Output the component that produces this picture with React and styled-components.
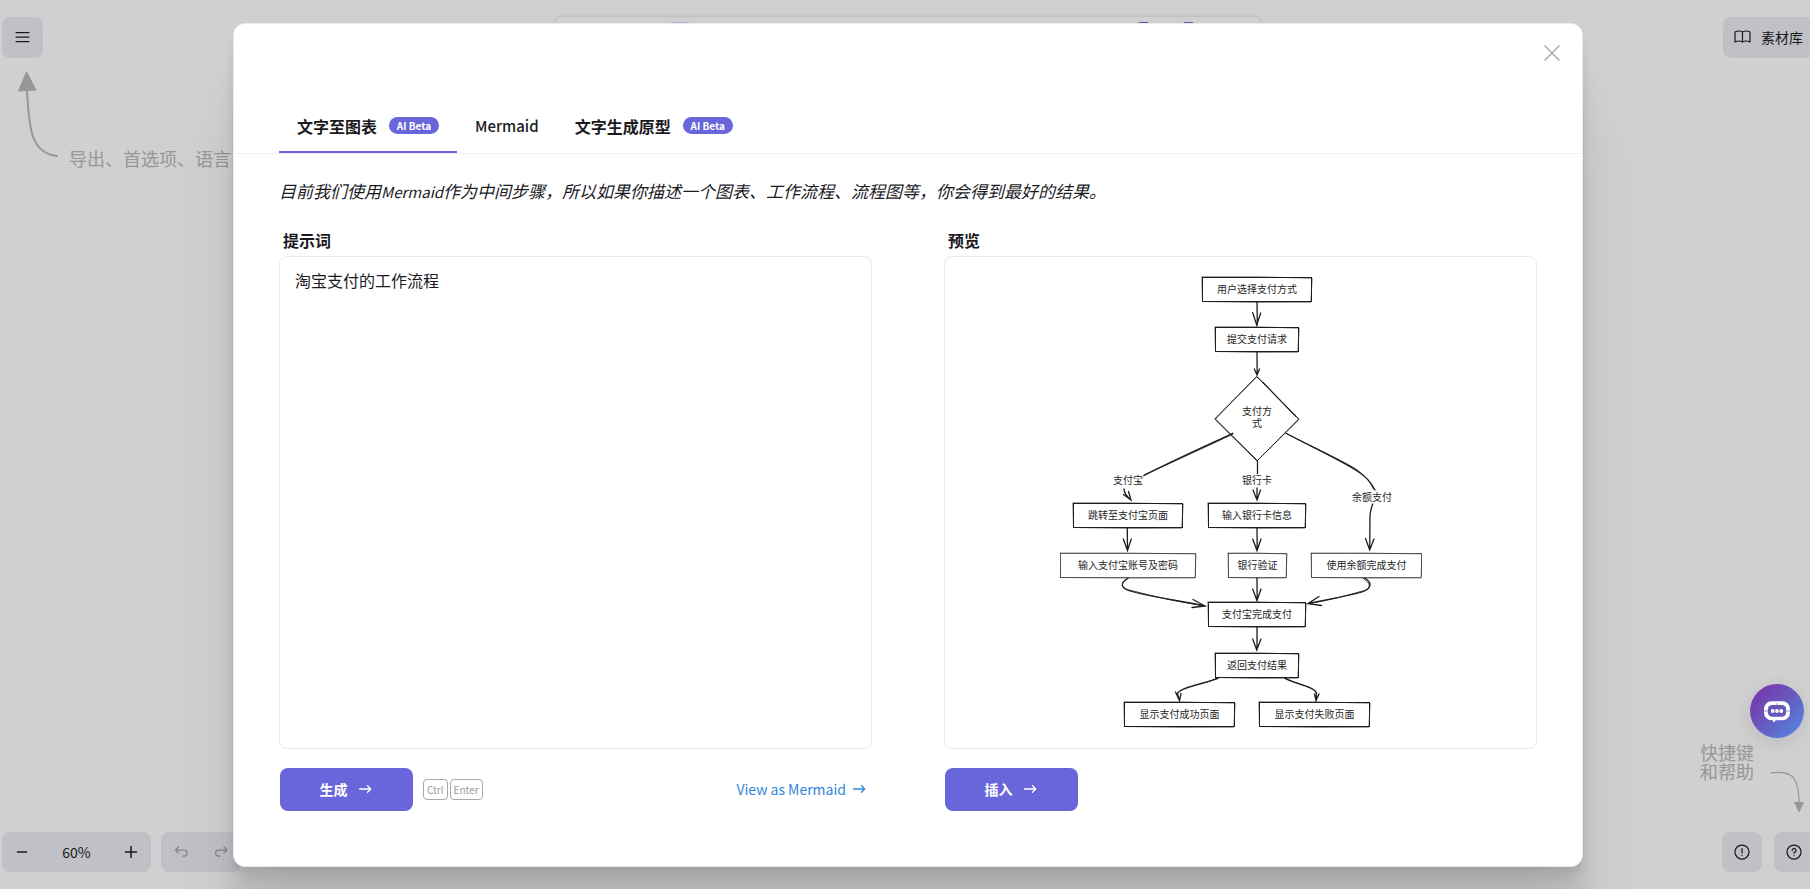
import React from "react";
import styled, { createGlobalStyle } from "styled-components";

const GlobalStyle = createGlobalStyle`
  *, *::before, *::after { box-sizing: border-box; }
  html, body { margin: 0; background: #fff; }
  body { overflow: hidden; }
  body, button, textarea, kbd {
    font-family: "Noto Sans CJK SC", "Noto Sans", sans-serif;
  }
  button { border: 0; padding: 0; cursor: pointer; color: inherit; }
`;

const ACCENT = "#6965db";
const INK = "#1b1b1f";

const Page = styled.div`
  height: 100vh;
  overflow: hidden;
  color: ${INK};
`;

/* The editor is slightly wider than the window, so its right edge is cut. */
const Editor = styled.div`
  position: relative;
  width: calc(100% + 6px);
  height: 100%;
  padding: 17px 2px;
  display: flex;
  flex-direction: column;
  justify-content: space-between;
`;

const TopBar = styled.header`
  display: flex;
  justify-content: space-between;
  align-items: flex-start;
`;

const BottomBar = styled.footer`
  display: flex;
  justify-content: space-between;
  align-items: flex-end;
`;

const Column = styled.div`
  display: flex;
  flex-direction: column;
  align-items: ${(p) => p.$align || "flex-start"};
`;

const Row = styled.div`
  display: flex;
  align-items: ${(p) => p.$align || "center"};
  gap: ${(p) => p.$gap || 0}px;
`;

const ToolButton = styled.button`
  display: flex;
  align-items: center;
  justify-content: center;
  gap: 10px;
  width: 40px;
  height: 40px;
  border-radius: 8px;
  background: #ececf4;
`;

const MenuButton = styled(ToolButton)`
  width: 41px;
  height: 41px;
`;

const LibraryButton = styled(ToolButton)`
  width: 91px;
  height: 41px;
  padding-bottom: 2px;
  font-size: 14px;
`;

const ButtonGroup = styled.div`
  display: flex;
  align-items: center;
  height: 40px;
  border-radius: 8px;
  background: #ececf4;
`;

const GroupButton = styled.button`
  display: flex;
  align-items: center;
  justify-content: center;
  width: ${(p) => p.$width || 40}px;
  height: 40px;
  background: transparent;
  font-size: 14px;
  opacity: ${(p) => (p.disabled ? 0.35 : 1)};
`;

const ShapeBar = styled.div`
  position: absolute;
  left: 50%;
  top: 16px;
  width: 708px;
  height: 46px;
  margin-left: -354px;
  border: 1px solid #ededed;
  border-radius: 8px;
  box-shadow: 0 0 3px rgba(0, 0, 0, 0.1);
  display: flex;
  justify-content: space-between;
  padding: 5px 66px 5px 110px;
`;

const ActiveTool = styled.span`
  width: 30px;
  height: 34px;
  border-radius: 8px;
  background: #e0dfff;
`;

const ToolMark = styled.span`
  width: 13px;
  height: 13px;
  border: 2px solid ${ACCENT};
  border-radius: 4px;
`;

const Hint = styled.p`
  margin: 0;
  color: #b8b8b8;
  font-size: 18px;
  line-height: 19px;
  white-space: nowrap;
`;

const MenuHint = styled.div`
  display: flex;
  align-items: flex-end;
  gap: 10px;
  padding: 13px 0 0 15px;
`;

const HelpHint = styled.div`
  display: flex;
  align-items: flex-start;
  gap: 14px;
  padding: 0 8px 18px 0;
`;

const ChatButton = styled.button`
  display: flex;
  align-items: center;
  justify-content: center;
  width: 54px;
  height: 54px;
  margin: 0 10px 5px 0;
  position: relative;
  z-index: 2;
  border-radius: 50%;
  background: linear-gradient(135deg, #7b2fa8 0%, #6a55bb 45%, #4f8de6 100%);
  box-shadow: 0 4px 16px rgba(80, 80, 140, 0.16);
`;

const Overlay = styled.div`
  position: absolute;
  inset: 0;
  z-index: 1;
  display: flex;
  align-items: center;
  justify-content: center;
  background: rgba(18, 18, 18, 0.2);
`;

const Modal = styled.section`
  position: relative;
  width: calc(100% - 466px);
  min-width: 900px;
  height: calc(100% - 45px);
  display: flex;
  flex-direction: column;
  padding: 77px 0 55px;
  border: 1px solid #ebebeb;
  border-radius: 12px;
  background: #fff;
  box-shadow:
    0 100px 80px rgba(0, 0, 0, 0.07),
    0 41px 33px rgba(0, 0, 0, 0.05),
    0 22px 18px rgba(0, 0, 0, 0.04),
    0 12px 10px rgba(0, 0, 0, 0.04),
    0 6px 5px rgba(0, 0, 0, 0.03),
    0 2px 2px rgba(0, 0, 0, 0.02);
`;

const CloseButton = styled.button`
  position: absolute;
  top: 17px;
  right: 18px;
  width: 24px;
  height: 24px;
  display: flex;
  align-items: center;
  justify-content: center;
  background: transparent;
  color: #adadad;
`;

const Tabs = styled.div`
  display: flex;
  padding: 0 45px;
  border-bottom: 1px solid #f0eff9;
`;

const Tab = styled.button`
  display: flex;
  align-items: center;
  gap: 12px;
  height: 52px;
  padding: 0 18px;
  background: transparent;
  border-bottom: 2px solid ${(p) => (p.$active ? ACCENT : "transparent")};
  font-size: ${(p) => (p.$latin ? 15 : 16)}px;
  font-weight: ${(p) => (p.$latin ? 500 : 700)};
`;

const Badge = styled.span`
  display: flex;
  align-items: center;
  justify-content: center;
  width: 50px;
  height: 17px;
  border-radius: 9px;
  background: ${ACCENT};
  color: #fff;
  font-size: 10px;
  font-weight: 700;
`;

const Description = styled.p`
  margin: 24px 45px 0;
  font-size: 17px;
  line-height: 26px;
  font-style: italic;
`;

const Latin = styled.span`
  font-size: 15px;
`;

const Panels = styled.div`
  flex: 1;
  min-height: 0;
  display: grid;
  grid-template-columns: 1fr 1fr;
  gap: 72px;
  padding: 23px 45px 0;
`;

const Panel = styled.div`
  display: flex;
  flex-direction: column;
  min-width: 0;
  min-height: 0;
`;

const PanelTitle = styled.label`
  padding-left: 4px;
  margin-bottom: 4px;
  font-size: 16px;
  line-height: 24px;
  font-weight: 700;
`;

const PromptBox = styled.textarea`
  flex: 1;
  width: 100%;
  min-height: 0;
  padding: 11px 15px;
  border: 1px solid #e9e9e9;
  border-radius: 8px;
  outline: 0;
  resize: none;
  background: #fff;
  color: ${INK};
  font-size: 16px;
  line-height: 24px;
`;

const PreviewBox = styled.div`
  flex: 1;
  min-height: 0;
  display: flex;
  align-items: center;
  justify-content: center;
  border: 1px solid #e9e9e9;
  border-radius: 8px;
`;

const Actions = styled.div`
  display: flex;
  align-items: center;
  height: 43px;
  margin-top: 19px;
  padding: 0 6px 0 1px;
`;

const PrimaryButton = styled.button`
  display: flex;
  align-items: center;
  justify-content: center;
  gap: 10px;
  width: 133px;
  height: 43px;
  padding-right: 2px;
  border-radius: 8px;
  background: ${ACCENT};
  color: #fff;
  font-size: 14px;
  font-weight: 700;
`;

const Keys = styled.div`
  display: flex;
  gap: 2px;
  margin-left: 10px;
`;

const Key = styled.kbd`
  height: 21px;
  padding: 0 3px;
  border: 1px solid #a9a9a9;
  border-radius: 4px;
  color: #999;
  font-size: 10px;
  line-height: 19px;
`;

const TextLink = styled.a`
  display: flex;
  align-items: center;
  gap: 6px;
  margin-left: auto;
  color: #2f86d9;
  font-size: 14px;
  text-decoration: none;
`;

const Icon = ({ size = 16, width = 1.25, children }) => (
  <svg
    width={size}
    height={size}
    viewBox={`0 0 ${size} ${size}`}
    fill="none"
    stroke="currentColor"
    strokeWidth={width}
    strokeLinecap="round"
    strokeLinejoin="round"
    aria-hidden="true"
  >
    {children}
  </svg>
);

const ArrowIcon = () => (
  <Icon size={14} width={1.3}>
    <path d="M1.500 7h11M9.500 3.800 12.700 7 9.500 10.200" />
  </Icon>
);

/* x, top, width, label, and whether the outline is drawn lightly */
const NODES = [
  [142, 2, 110, "用户选择支付方式"],
  [155, 52, 84, "提交支付请求"],
  [13, 228, 110, "跳转至支付宝页面"],
  [148, 228, 98, "输入银行卡信息"],
  [0, 278, 136, "输入支付宝账号及密码", true],
  [168, 278, 59, "银行验证", true],
  [251, 278, 111, "使用余额完成支付", true],
  [148, 327, 98, "支付宝完成支付"],
  [155, 378, 84, "返回支付结果"],
  [64, 427, 111, "显示支付成功页面"],
  [199, 427, 111, "显示支付失败页面"],
];

const EDGES = [
  "M197 27 197.3 50M192.7 37.7 196.7 50 200.7 38",
  "M197 77 197.2 100M194.3 94 197 100 199.6 94",
  "M172.7 158.3C150 169 112 186 83 201",
  "M64 214Q64 219 71 225M63.5 219.5 71 225 68.5 216.5",
  "M197.5 186V199M197 213V225M193 215 197 225 200.5 215",
  "M226 158.3C250 171 284 187 297 196Q309 203 315 215",
  "M312.7 229Q310 236 310 242L309.7 275M305.5 263.5 309.7 275 314 264",
  "M67.3 253 67.5 275.5M63.3 264 67.5 275.5 71.3 264",
  "M197 253 197.2 275.5M192.7 264 197 275.5 201 264",
  "M68 303.3C60 308 60 313 70 316 94 323 118 325 145 331M133 324.5 145 331 132 332.5",
  "M197 303 197.2 325.5M192.7 314 197 325.5 201 314",
  "M305 303.3C313 308 311 314 302 317 286 322 267 324 248 328.7M259 321.5 248 328.7 261.5 330.5",
  "M197 352.5 197 375M192.7 364 196.7 375 201 364",
  "M158 403.3C144 409 119 412 117.5 419L119.5 425.7M115.5 417 119.5 425.7 121 418.5",
  "M225 403.3C236 409 256 412 256.5 419L256 425.7M254.5 419 256 425.7 259 419",
];

/* Second passes of the pen over the long curves. */
const RETRACES = [
  "M173 159C148 171 108 189 84 200",
  "M226 158.3C254 173 284 186 298 195.500Q310 205 313.500 214",
  "M68 303.300C58 309 63 314 71 315.500 96 322 120 327 145 331",
  "M303 303.300C314 310 309 315 301 316.500 284 321 267 326 248 328.700",
  "M157 403.300C142 410 122 412 116.500 419",
  "M226 404C238 410 254 411 257 418",
];

const CAPTIONS = [
  [197, 140, "支付方"],
  [197, 152, "式"],
  [68, 209, "支付宝"],
  [197, 209, "银行卡"],
  [312, 226, "余额支付"],
];

const FlowSvg = styled.svg`
  display: block;
  max-width: 100%;
  max-height: 100%;
  font-family: "Noto Sans CJK SC", sans-serif;
  font-size: 10px;
`;

function FlowChart() {
  return (
    <FlowSvg width="362" height="455" viewBox="0 0 362 455" role="img" aria-label="淘宝支付的工作流程">
      <g fill="none" stroke="#1e1e1e" strokeLinecap="round">
        {NODES.map(([x, y, w, label, faint]) => (
          <g key={label}>
            <rect x={x + 0.5} y={y + 0.5} width={w - 1} height={24} strokeWidth={faint ? 0.6 : 1} />
            <path
              strokeWidth={faint ? 0.5 : 0.8}
              d={`M${x + 0.5} ${y}Q${x + w / 2} ${y - 0.5} ${x + w} ${y + 1}L${x + w - 1} ${y + 25}Q${x + w / 2} ${y + 25.5} ${x + 0.5} ${y + 24.5}L${x} ${y}`}
            />
          </g>
        ))}
        <path strokeWidth="1" d="M197 102 238.7 144 197 186 155 144.3Z" />
        <path strokeWidth="0.8" strokeDasharray="2 1" d="M197.7 102 239 144.5 197.5 185.5 155.5 144 196.6 101.5" />
        <path strokeWidth="1.1" d="M203 107.5 236 141.5" />
        {EDGES.map((d) => (
          <path key={d} d={d} strokeWidth="1.3" />
        ))}
        {RETRACES.map((d) => (
          <path key={d} d={d} strokeWidth="0.9" />
        ))}
      </g>
      <g fill="#1e1e1e" textAnchor="middle">
        {NODES.map(([x, y, w, label]) => (
          <text key={label} x={x + w / 2} y={y + 16}>{label}</text>
        ))}
        {CAPTIONS.map(([x, y, label]) => (
          <text key={label} x={x} y={y} stroke="#fff" strokeWidth="2" paintOrder="stroke">{label}</text>
        ))}
      </g>
    </FlowSvg>
  );
}

function EditorHeader() {
  return (
    <TopBar>
      <Column>
        <MenuButton aria-label="菜单">
          <Icon size={15}><path d="M1 2.500h13M1 7h13M1 11.500h13" /></Icon>
        </MenuButton>
        <MenuHint>
          <svg width="42" height="97" viewBox="0 0 42 97" aria-hidden="true">
            <path d="M9.500 1 19 19 1.500 20Z" fill="#b8b8b8" stroke="#b8b8b8" strokeLinejoin="round" />
            <path d="M10 19C12 58 14 82 40 85" fill="none" stroke="#b8b8b8" strokeWidth="2" strokeLinecap="round" />
          </svg>
          <Hint>导出、首选项、语言……</Hint>
        </MenuHint>
      </Column>
      <LibraryButton>
        <Icon size={17} width={1.2}>
          <path d="M8.500 4C6.500 2.800 3.500 2.800 1 4v10c2.500-1.200 5.500-1.200 7.500 0 2-1.200 5-1.200 7.500 0V4c-2.500-1.200-5.500-1.200-7.500 0v10" />
        </Icon>
        素材库
      </LibraryButton>
    </TopBar>
  );
}

function EditorFooter() {
  return (
    <BottomBar>
      <Row $gap={10}>
        <ButtonGroup>
          <GroupButton aria-label="缩小"><Icon width={1.5}><path d="M3.500 8h9" /></Icon></GroupButton>
          <GroupButton $width={69}>60%</GroupButton>
          <GroupButton aria-label="放大"><Icon width={1.5}><path d="M2.500 8h11M8 2.500v11" /></Icon></GroupButton>
        </ButtonGroup>
        <ButtonGroup>
          <GroupButton disabled aria-label="撤销">
            <Icon><path d="M5.500 9 2.500 6l3-3M2.500 6H11a3 3 0 0 1 0 6H9.500" /></Icon>
          </GroupButton>
          <GroupButton disabled aria-label="重做">
            <Icon><path d="m11 9 3-3-3-3M14 6H5.500a3 3 0 0 0 0 6H7" /></Icon>
          </GroupButton>
        </ButtonGroup>
      </Row>
      <Column $align="flex-end">
        <ChatButton aria-label="聊天">
          <svg width="28" height="24" viewBox="0 0 28 24" aria-hidden="true">
            <path d="M10 21.300H8.500a7.500 7.500 0 0 1-7.500-7.500V9.700a7.500 7.500 0 0 1 7.500-7.500h11a7.500 7.500 0 0 1 7.500 7.500v4.100a7.500 7.500 0 0 1-7.500 7.500h-6.500l-3 2.500Z" fill="#fff" />
            <rect x="4.800" y="6" width="18.400" height="11.800" rx="4.500" fill="#6759bc" />
            <path d="M14 4v3M1 12h3.500M23.500 12H27" stroke="#6759bc" strokeWidth="0.700" />
            <circle cx="9.700" cy="12" r="1.900" fill="#fff" />
            <circle cx="14" cy="12" r="1.900" fill="#fff" />
            <circle cx="18.300" cy="12" r="1.900" fill="#fff" />
          </svg>
        </ChatButton>
        <HelpHint>
          <Hint>快捷键<br />和帮助</Hint>
          <svg width="38" height="71" viewBox="0 -27 38 71" aria-hidden="true">
            <path d="M2 3C22 0 31 5 31 33" fill="none" stroke="#b8b8b8" strokeWidth="1.200" />
            <path d="M26 32h10l-5 11Z" fill="#b8b8b8" />
          </svg>
        </HelpHint>
        <Row $gap={12}>
          <ToolButton aria-label="状态">
            <Icon><circle cx="8" cy="8" r="7" /><path d="M8 4.500v4.500M8 11.300v.1" /></Icon>
          </ToolButton>
          <ToolButton aria-label="帮助">
            <Icon><circle cx="8" cy="8" r="7" /><path d="M6.200 6.400a1.900 1.900 0 1 1 2.700 1.700c-.6.300-.9.600-.9 1.200M8 11.500v.1" /></Icon>
          </ToolButton>
        </Row>
      </Column>
    </BottomBar>
  );
}

export default function App() {
  return (
    <Page>
      <GlobalStyle />
      <Editor>
        <ShapeBar>
          <ActiveTool />
          <Row $gap={32} $align="flex-start">
            <ToolMark />
            <ToolMark />
          </Row>
        </ShapeBar>
        <EditorHeader />
        <EditorFooter />
        <Overlay>
          <Modal role="dialog" aria-modal="true">
            <CloseButton aria-label="关闭">
              <Icon size={18} width={1.5}><path d="M2 2l14 14M16 2 2 16" /></Icon>
            </CloseButton>

            <Tabs role="tablist">
              <Tab role="tab" aria-selected="true" $active>
                文字至图表<Badge>AI Beta</Badge>
              </Tab>
              <Tab role="tab" aria-selected="false" $latin>Mermaid</Tab>
              <Tab role="tab" aria-selected="false">
                文字生成原型<Badge>AI Beta</Badge>
              </Tab>
            </Tabs>

            <Description>
              目前我们使用<Latin>Mermaid</Latin>作为中间步骤，所以如果你描述一个图表、工作流程、流程图等，你会得到最好的结果。
            </Description>

            <Panels>
              <Panel>
                <PanelTitle htmlFor="prompt">提示词</PanelTitle>
                <PromptBox id="prompt" defaultValue="淘宝支付的工作流程" />
                <Actions>
                  <PrimaryButton>生成<ArrowIcon /></PrimaryButton>
                  <Keys><Key>Ctrl</Key><Key>Enter</Key></Keys>
                  <TextLink href="#mermaid">View as Mermaid<ArrowIcon /></TextLink>
                </Actions>
              </Panel>
              <Panel>
                <PanelTitle as="div">预览</PanelTitle>
                <PreviewBox><FlowChart /></PreviewBox>
                <Actions>
                  <PrimaryButton>插入<ArrowIcon /></PrimaryButton>
                </Actions>
              </Panel>
            </Panels>
          </Modal>
        </Overlay>
      </Editor>
    </Page>
  );
}
